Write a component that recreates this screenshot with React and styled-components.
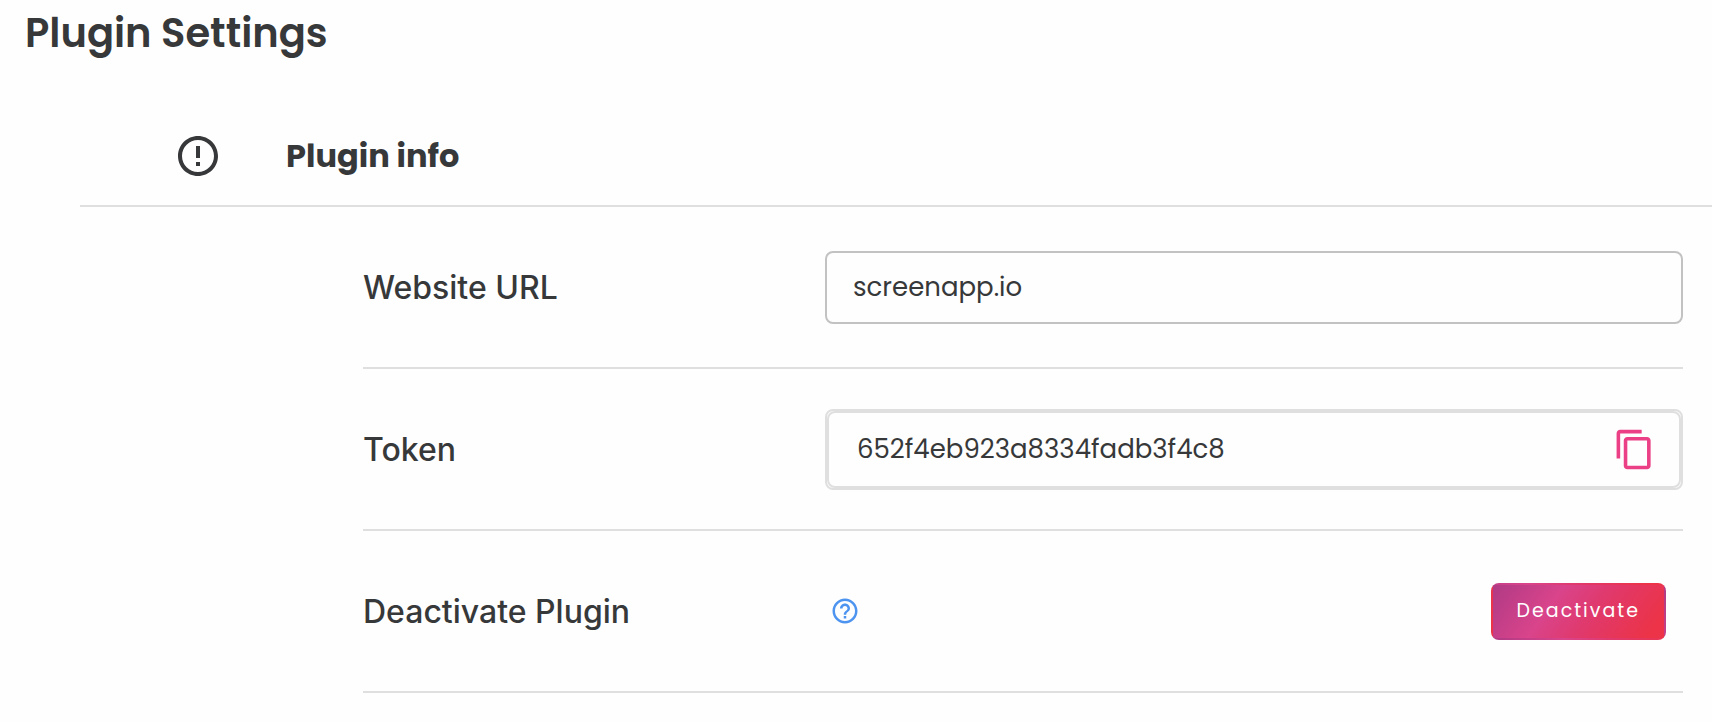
import React, { useState } from 'react';
import styled, { createGlobalStyle } from 'styled-components';
import { MdContentCopy, MdErrorOutline, MdHelpOutline } from 'react-icons/md';

const GlobalStyle = createGlobalStyle`
  * {
    box-sizing: border-box;
  }

  body {
    margin: 0;
    background-color: #fefefe;
    color: #373839;
    font-family: 'Poppins', 'Inter', sans-serif;
  }
`;

// Styled components
const Page = styled.main`
  padding-bottom: 28px;
`;

const PageTitle = styled.h1`
  margin: 0;
  padding: 8px 25px;
  font-size: 40px;
  font-weight: 600;
  line-height: 50px;
`;

const Section = styled.section`
  margin: 46px 0 0 80px;
`;

const SectionHeader = styled.header`
  display: flex;
  align-items: center;
  gap: 64px;
  padding: 20px 94px 25px;
  border-bottom: 2px solid #dfdfdf;

  svg {
    flex: none;
  }
`;

const SectionTitle = styled.h2`
  margin: 0;
  font-size: 32px;
  font-weight: 700;
  line-height: 48px;
`;

const Rows = styled.div`
  padding: 0 29px 0 283px;
`;

const Row = styled.div`
  display: grid;
  grid-template-columns: 35% 65%;
  align-items: center;
  min-height: 162px;
  border-bottom: 2px solid #dfdfdf;
`;

const Label = styled.label`
  padding-top: 2px;
  font-family: 'Inter', sans-serif;
  font-size: 32px;
  font-weight: 500;
  line-height: 40px;
`;

const TextInput = styled.input`
  width: 100%;
  height: 73px;
  padding: 0 26px;
  border: 2px solid #c2c2c2;
  border-radius: 8px;
  background: none;
  color: inherit;
  font-family: inherit;
  font-size: 26px;
  outline: none;
`;

const TokenBox = styled.div`
  border: 2px solid #dfdfdf;
  border-radius: 8px;
`;

const TokenField = styled.div`
  display: flex;
  align-items: center;
  height: 77px;
  padding-right: 23px;
  border: 2px solid #dfdfdf;
  border-radius: 8px;
`;

const TokenInput = styled(TextInput)`
  flex: 1;
  min-width: 0;
  height: 100%;
  padding: 0 28px;
  border: none;
`;

const IconButton = styled.button`
  display: flex;
  padding: 0;
  border: none;
  background: none;
  color: ${props => props.$color};
  cursor: pointer;
`;

const Actions = styled.div`
  display: flex;
  align-items: center;
  justify-content: space-between;
  padding: 0 17px 0 5px;
`;

const DeactivateButton = styled.button`
  height: 57px;
  padding: 0 24px 2px;
  border: 2px solid transparent;
  border-radius: 8px;
  background-image: linear-gradient(125deg, #b03a85 0%, #d9448b 34%, #e0396c 58%, #ec3347 92%);
  color: #fff;
  font-family: inherit;
  font-size: 19px;
  letter-spacing: 2px;
  cursor: pointer;
`;

const App = () => {
  const [website, setWebsite] = useState('screenapp.io');
  const token = '652f4eb923a8334fadb3f4c8';

  const handleCopyClick = () => {
    navigator.clipboard.writeText(token);
  };

  return (
    <>
      <GlobalStyle />
      <Page>
        <PageTitle>Plugin Settings</PageTitle>
        <Section>
          <SectionHeader>
            <MdErrorOutline size={48} />
            <SectionTitle>Plugin info</SectionTitle>
          </SectionHeader>
          <Rows>
            <Row>
              <Label htmlFor="website">Website URL</Label>
              <TextInput id="website" value={website} onChange={e => setWebsite(e.target.value)} />
            </Row>
            <Row>
              <Label htmlFor="token">Token</Label>
              <TokenBox>
                <TokenField>
                  <TokenInput id="token" value={token} readOnly />
                  <IconButton type="button" $color="#eb4086" aria-label="Copy token" onClick={handleCopyClick}>
                    <MdContentCopy size={43} />
                  </IconButton>
                </TokenField>
              </TokenBox>
            </Row>
            <Row>
              <Label htmlFor="deactivate">Deactivate Plugin</Label>
              <Actions>
                <IconButton type="button" $color="#4d94f0" aria-label="Help">
                  <MdHelpOutline size={30} />
                </IconButton>
                <DeactivateButton id="deactivate" type="button">Deactivate</DeactivateButton>
              </Actions>
            </Row>
          </Rows>
        </Section>
      </Page>
    </>
  );
};

export default App;
